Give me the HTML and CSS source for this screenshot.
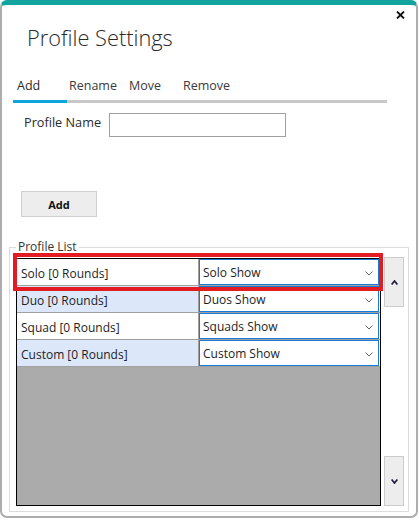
FILE: index.html
```html
<!DOCTYPE html>
<html>
<head>
<meta charset="utf-8">
<link rel="stylesheet" href="styles.css">
</head>
<body>
<div class="window">
  <div class="close-row">
    <svg class="close" width="9" height="8" viewBox="0 0 9 8"><path d="M1 0.5L8 7.5M8 0.5L1 7.5" stroke="#111" stroke-width="1.8"/></svg>
  </div>
  <h1 class="title">Profile Settings</h1>
  <div class="tabs">
    <div class="tab active">Add</div>
    <div class="tab">Rename</div>
    <div class="tab">Move</div>
    <div class="tab">Remove</div>
  </div>
  <div class="name-row">
    <label class="name-label">Profile Name</label>
    <input class="name-input" type="text">
  </div>
  <button class="add-btn">Add</button>
  <div class="group">
    <div class="group-label">Profile List</div>
    <div class="list-row">
      <div class="grid">
        <div class="row">
          <div class="cell name">Solo [0 Rounds]</div>
          <div class="cell combo-cell"><div class="combo"><span>Solo Show</span><svg width="8" height="5" viewBox="0 0 8 5"><path d="M0.5 0.5L4 4L7.5 0.5" fill="none" stroke="#666" stroke-width="1"/></svg></div></div>
        </div>
        <div class="row alt">
          <div class="cell name">Duo [0 Rounds]</div>
          <div class="cell combo-cell"><div class="combo"><span>Duos Show</span><svg width="8" height="5" viewBox="0 0 8 5"><path d="M0.5 0.5L4 4L7.5 0.5" fill="none" stroke="#666" stroke-width="1"/></svg></div></div>
        </div>
        <div class="row">
          <div class="cell name">Squad [0 Rounds]</div>
          <div class="cell combo-cell"><div class="combo"><span>Squads Show</span><svg width="8" height="5" viewBox="0 0 8 5"><path d="M0.5 0.5L4 4L7.5 0.5" fill="none" stroke="#666" stroke-width="1"/></svg></div></div>
        </div>
        <div class="row alt">
          <div class="cell name">Custom [0 Rounds]</div>
          <div class="cell combo-cell"><div class="combo"><span>Custom Show</span><svg width="8" height="5" viewBox="0 0 8 5"><path d="M0.5 0.5L4 4L7.5 0.5" fill="none" stroke="#666" stroke-width="1"/></svg></div></div>
        </div>
        <div class="highlight"></div>
      </div>
      <div class="scroll">
        <button class="scroll-btn"><svg width="7" height="5" viewBox="0 0 7 5"><path d="M0.6 4.5L3.5 1L6.4 4.5" fill="none" stroke="#1b1b3a" stroke-width="1.7"/></svg></button>
        <button class="scroll-btn"><svg width="7" height="5" viewBox="0 0 7 5"><path d="M0.6 0.5L3.5 4L6.4 0.5" fill="none" stroke="#1b1b3a" stroke-width="1.7"/></svg></button>
      </div>
    </div>
  </div>
</div>
</body>
</html>
```
FILE: styles.css
```css
* { box-sizing: border-box; }
html, body { margin: 0; padding: 0; background: #ffffff; }
body { font-family: "Open Sans", "Noto Sans", sans-serif; color: #1e1e1e; }

.window {
  width: 418px;
  height: 518px;
  border: 2px solid #adadad;
  border-top: 5px solid #12a49f;
  border-radius: 7px;
  background: #ffffff;
}

.close-row {
  height: 18px;
  padding-top: 6px;
  padding-right: 11px;
  display: flex;
  justify-content: flex-end;
}
.close { display: block; }

.title {
  margin: 1px 0 0 0;
  padding-left: 25px;
  font-size: 21.8px;
  font-weight: 300;
  line-height: 28px;
  color: #2a2a2a;
}

.tabs {
  display: flex;
  margin: 26px 0 0 11px;
  width: 374px;
  border-bottom: 3px solid #c8c8c8;
}
.tab {
  font-size: 12.5px;
  line-height: 16px;
  padding: 0 0 6px 2px;
  color: #3a3a3a;
}
.tab:nth-child(1) { width: 54px; padding-left: 4px; color: #2a2a2a; }
.tab:nth-child(2) { width: 60px; }
.tab:nth-child(3) { width: 54px; }
.tab.active {
  border-bottom: 3px solid #0ba6dc;
  margin-bottom: -3px;
}

.name-row {
  display: flex;
  margin-top: 10px;
  padding-left: 22px;
}
.name-label {
  width: 85px;
  margin-top: 1px;
  font-size: 12.7px;
  line-height: 16px;
  color: #2a2a2a;
}
.name-input {
  width: 177px;
  height: 24px;
  margin: 0;
  padding: 0;
  border: 1px solid #a0a0a0;
  background: #fff;
}

.add-btn {
  display: block;
  margin: 54px 0 0 19px;
  width: 76px;
  height: 26px;
  padding: 0;
  background: #ededed;
  border: 1px solid #cfcfcf;
  font-family: "Open Sans", "Noto Sans", sans-serif;
  font-weight: 700;
  font-size: 11px;
  color: #111;
}

.group {
  margin: 30px 0 0 7px;
  width: 400px;
  height: 265px;
  border: 1px solid #dcdcdc;
}
.group-label {
  margin: -8px 0 0 6px;
  padding: 0 2px;
  width: fit-content;
  background: #fff;
  font-size: 12px;
  line-height: 14px;
  color: #333;
}

.list-row {
  display: flex;
  gap: 3px;
  margin: 3px 0 0 6px;
}

.grid {
  position: relative;
  width: 365px;
  height: 248px;
  margin-top: 1px;
  border: 1px solid #000;
  background: #ababab;
}
.row {
  display: grid;
  grid-template-columns: 182px 181px;
  height: 27px;
}
.cell {
  height: 27px;
  border-bottom: 1px solid #a0a0a0;
  font-size: 12px;
}
.name {
  background: #ffffff;
  border-right: 1px solid #a0a0a0;
  padding: 3px 0 0 4px;
  line-height: 23px;
  color: #1e1e1e;
}
.row.alt .name { background: #dde7fa; }
.combo-cell { background: #ffffff; }
.combo {
  width: 180px;
  height: 26px;
  border: 1px solid #1a7bd6;
  background: #fff;
  display: flex;
  align-items: center;
  justify-content: space-between;
  padding: 2px 5px 0 3px;
}
.combo span { line-height: 22px; color: #1e1e1e; }
.combo svg { display: block; }

.highlight {
  position: absolute;
  left: -4px;
  top: -6px;
  width: 370px;
  height: 38px;
  border: 4px solid #e31b23;
  pointer-events: none;
}

.scroll {
  display: flex;
  flex-direction: column;
  justify-content: space-between;
  width: 20px;
  height: 249px;
}
.scroll-btn {
  width: 20px;
  height: 50px;
  padding: 0;
  background: #ededed;
  border: 1px solid #cccccc;
  display: flex;
  align-items: center;
  justify-content: center;
}
.scroll-btn svg { display: block; }
```
